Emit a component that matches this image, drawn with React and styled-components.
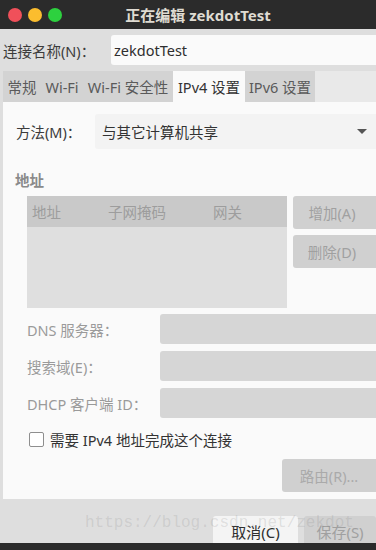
import React from "react";
import styled, { createGlobalStyle } from "styled-components";

const GlobalStyle = createGlobalStyle`
  html, body {
    margin: 0;
    padding: 0;
    background: #dedede;
  }
  * {
    box-sizing: border-box;
  }
`;

const FONT = `"Noto Sans", "Noto Sans CJK SC", sans-serif`;

const Window = styled.div`
  position: relative;
  width: 376px;
  height: 550px;
  overflow: hidden;
  display: flex;
  flex-direction: column;
  background: #dedede;
  font-family: ${FONT};
  font-size: 14.5px;
  color: #3c3c3c;
`;

const TitleBar = styled.div`
  height: 29px;
  flex-shrink: 0;
  background: #2b2b2b;
  display: flex;
  align-items: center;
  padding-left: 8px;
  gap: 6px;
`;

const Light = styled.span`
  width: 14px;
  height: 14px;
  border-radius: 50%;
  background: ${(p) => p.color};
`;

const Title = styled.div`
  flex: 1;
  text-align: center;
  margin-right: 48px;
  color: #dfdbd2;
  font-weight: 700;
  font-size: 15px;
`;

const NameRow = styled.div`
  display: flex;
  align-items: center;
  height: 30px;
  margin-top: 6px;
  padding-left: 3px;
`;

const NameLabel = styled.div`
  width: 108px;
  color: #3c3c3c;
`;

const Entry = styled.div`
  flex: 1;
  height: 30px;
  display: flex;
  align-items: center;
  padding-left: 3px;
  background: ${(p) => (p.disabled ? "#d6d6d6" : "#fafafa")};
  border-radius: 3px 0 0 3px;
  color: #2e2e2e;
`;

const TabStrip = styled.div`
  display: flex;
  height: 31px;
  margin-top: 6px;
  margin-left: 3px;
  background: #e9e9e9;
`;

const Tab = styled.div`
  width: ${(p) => p.w}px;
  display: flex;
  align-items: center;
  justify-content: center;
  background: ${(p) => (p.active ? "#fafafa" : "#d3d3d3")};
  color: ${(p) => (p.active ? "#333" : "#5a5a5a")};
  white-space: nowrap;
`;

const Panel = styled.div`
  height: 397px;
  flex-shrink: 0;
  margin-left: 3px;
  background: #fafafa;
  display: flex;
  flex-direction: column;
`;

const MethodRow = styled.div`
  display: flex;
  align-items: center;
  margin-top: 12px;
  height: 35px;
  padding-left: 13px;
`;

const MethodLabel = styled.div`
  width: 79px;
  color: #3c3c3c;
`;

const Combo = styled.div`
  flex: 1;
  height: 35px;
  display: flex;
  align-items: center;
  justify-content: space-between;
  padding: 0 9px 0 7px;
  background: #f3f3f3;
  border-radius: 3px 0 0 3px;
  color: #333;
`;

const Arrow = styled.span`
  width: 0;
  height: 0;
  border-left: 5px solid transparent;
  border-right: 5px solid transparent;
  border-top: 5px solid #555;
`;

const SectionTitle = styled.div`
  margin-top: 20px;
  padding-left: 12px;
  font-weight: 700;
  color: #8a8a8a;
  height: 22px;
  line-height: 22px;
`;

const AddressRow = styled.div`
  display: flex;
  margin-top: 5px;
  padding-left: 24px;
  gap: 6px;
`;

const Table = styled.div`
  width: 260px;
  height: 112px;
  background: #dfdfdf;
`;

const TableHead = styled.div`
  height: 31px;
  display: grid;
  grid-template-columns: 76px 105px 1fr;
  align-items: center;
  padding-left: 5px;
  background: #c9c9c9;
  color: #9d9d9d;
`;

const SideButtons = styled.div`
  flex: 1;
  display: flex;
  flex-direction: column;
  gap: 6px;
`;

const GrayButton = styled.div`
  height: 33px;
  display: flex;
  align-items: center;
  justify-content: center;
  padding-right: ${(p) => p.pr || 0}px;
  background: #d0d0d0;
  border-radius: 3px 0 0 3px;
  color: #a0a0a0;
`;

const FieldGrid = styled.div`
  display: grid;
  grid-template-columns: 133px 1fr;
  row-gap: 7px;
  margin-top: 6px;
  padding-left: 24px;
  align-items: center;
`;

const FieldLabel = styled.div`
  color: #9a9a9a;
`;

const CheckRow = styled.div`
  display: flex;
  align-items: center;
  gap: 6px;
  margin-top: 11px;
  padding-left: 26px;
  color: #333;
`;

const Check = styled.span`
  width: 15px;
  height: 15px;
  border: 1px solid #8e8e8e;
  border-radius: 2px;
  background: #fff;
`;

const RouteRow = styled.div`
  display: flex;
  justify-content: flex-end;
  margin-top: 9px;
`;

const RouteButton = styled(GrayButton)`
  width: 94px;
  color: #aaa;
`;

const Footer = styled.div`
  height: 44px;
  flex-shrink: 0;
  display: flex;
  justify-content: flex-end;
  align-items: flex-start;
  gap: 6px;
  padding-top: 17px;
  overflow: hidden;
`;

const FooterButton = styled.div`
  width: ${(p) => p.w}px;
  height: 34px;
  display: flex;
  align-items: center;
  justify-content: center;
  padding-bottom: 4px;
  border-radius: 3px;
  background: ${(p) => (p.primary ? "#f4f4f4" : "#d0d0d0")};
  color: ${(p) => (p.primary ? "#2e2e2e" : "#a0a0a0")};
  font-size: 15px;
`;

const BottomBar = styled.div`
  flex: 1;
  background: #2b2b2b;
`;

const Watermark = styled.div`
  position: absolute;
  left: 85px;
  top: 514px;
  font-family: "Liberation Mono", monospace;
  font-size: 16px;
  color: rgba(120, 120, 120, 0.18);
  white-space: nowrap;
  pointer-events: none;
`;

export default function App() {
  return (
    <>
      <GlobalStyle />
      <Window>
        <TitleBar>
          <Light color="#f0505a" />
          <Light color="#fbbd2e" />
          <Light color="#2dd13f" />
          <Title>正在编辑 zekdotTest</Title>
        </TitleBar>

        <NameRow>
          <NameLabel>连接名称(N)：</NameLabel>
          <Entry>zekdotTest</Entry>
        </NameRow>

        <TabStrip>
          <Tab w={38}>常规</Tab>
          <Tab w={42}>Wi-Fi</Tab>
          <Tab w={90}>Wi-Fi 安全性</Tab>
          <Tab w={72} active>IPv4 设置</Tab>
          <Tab w={70}>IPv6 设置</Tab>
        </TabStrip>

        <Panel>
          <MethodRow>
            <MethodLabel>方法(M)：</MethodLabel>
            <Combo>
              <span>与其它计算机共享</span>
              <Arrow />
            </Combo>
          </MethodRow>

          <SectionTitle>地址</SectionTitle>
          <AddressRow>
            <Table>
              <TableHead>
                <span>地址</span>
                <span>子网掩码</span>
                <span>网关</span>
              </TableHead>
            </Table>
            <SideButtons>
              <GrayButton pr={5}>增加(A)</GrayButton>
              <GrayButton pr={5}>删除(D)</GrayButton>
            </SideButtons>
          </AddressRow>

          <FieldGrid>
            <FieldLabel>DNS 服务器：</FieldLabel>
            <Entry disabled />
            <FieldLabel>搜索域(E)：</FieldLabel>
            <Entry disabled />
            <FieldLabel>DHCP 客户端 ID：</FieldLabel>
            <Entry disabled />
          </FieldGrid>

          <CheckRow>
            <Check />
            <span>需要 IPv4 地址完成这个连接</span>
          </CheckRow>

          <RouteRow>
            <RouteButton>路由(R)...</RouteButton>
          </RouteRow>
        </Panel>

        <Footer>
          <FooterButton primary w={85}>取消(C)</FooterButton>
          <FooterButton w={72}>保存(S)</FooterButton>
        </Footer>
        <BottomBar />
        <Watermark>https://blog.csdn.net/zekdot</Watermark>
      </Window>
    </>
  );
}
